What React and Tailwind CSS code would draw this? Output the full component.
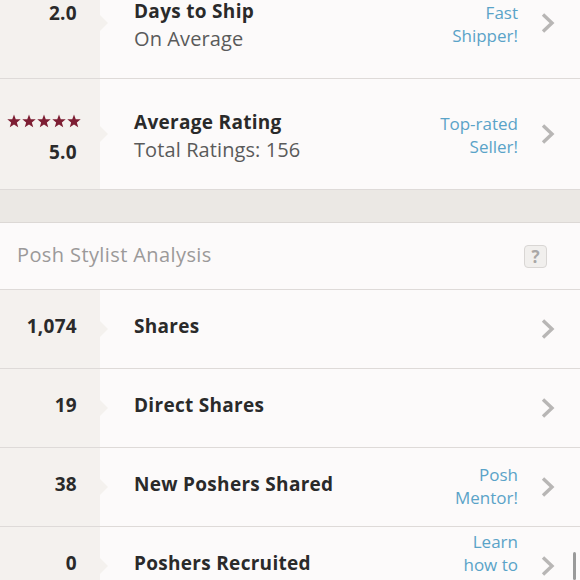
import React from "react";

const font = { fontFamily: "'Open Sans', Lato, sans-serif" };

function Chevron() {
  return (
    <svg width="16" height="22" viewBox="0 0 16 22" className="shrink-0">
      <path d="M3 2.5 L12 11 L3 19.5" fill="none" stroke="#b8b6b5" strokeWidth="3.4" />
    </svg>
  );
}

function Star() {
  return (
    <svg width="14" height="14" viewBox="0 0 24 23">
      <path
        d="M12 0.5 L15 8.3 L23.5 8.7 L16.9 14 L19.2 22.2 L12 17.6 L4.8 22.2 L7.1 14 L0.5 8.7 L9 8.3 Z"
        fill="#7d1e33"
      />
    </svg>
  );
}

// one stat row: grey number column on the left with a little notch, label, link text, chevron
function Row({ height, left, title, sub, link, linkTop = false }) {
  return (
    <div className={`flex border-b border-[#dedad8] ${height}`}>
      <div className="relative w-[100px] shrink-0 bg-[#f4f1ee] flex flex-col items-end justify-center pr-[23px]">
        {left}
        <div className="absolute right-[-8px] top-1/2 -translate-y-1/2 w-0 h-0 border-y-[8px] border-y-transparent border-l-[8px] border-l-[#f4f1ee]" />
      </div>
      <div className="flex-1 flex items-center pl-[34px] pr-[24px]">
        <div className={`flex-1 ${sub ? "pt-[4px]" : "-mt-[6px]"}`}>
          <div className="text-[19px] font-bold tracking-[0.3px] text-[#2a2a2a] leading-[27px]">{title}</div>
          {sub && <div className="text-[20px] tracking-[0.1px] text-[#5a5a5a] leading-[28px]">{sub}</div>}
        </div>
        {link && (
          <div
            className={`text-right text-[17px] leading-[23px] text-[#5aa3c8] mr-[22px] ${
              linkTop ? "self-start pt-[3px]" : sub ? "mt-[1px]" : "-mt-[2px]"
            }`}
          >
            {link.map((l) => (
              <div key={l}>{l}</div>
            ))}
          </div>
        )}
        <Chevron />
      </div>
    </div>
  );
}

function Num({ children, className = "-mt-[6px]" }) {
  return <div className={`text-[19px] font-bold tracking-[0.3px] text-[#2a2a2a] ${className}`}>{children}</div>;
}

export default function App() {
  return (
    <div className="relative w-[580px] h-[580px] overflow-hidden bg-[#fcfafa]" style={font}>
      <div className="-mt-[32px]">
        <Row
          height="h-[111px]"
          left={<Num className="-mt-[20px]">2.0</Num>}
          title="Days to Ship"
          sub="On Average"
          link={["Fast", "Shipper!"]}
        />
        <Row
          height="h-[111px]"
          left={
            <div className="flex flex-col items-end mr-[-4px] mt-[12px]">
              <div className="flex gap-[1px]">
                <Star />
                <Star />
                <Star />
                <Star />
                <Star />
              </div>
              <Num className="mt-[10px] mr-[4px]">5.0</Num>
            </div>
          }
          title="Average Rating"
          sub="Total Ratings: 156"
          link={["Top-rated", "Seller!"]}
        />
        <div className="h-[33px] bg-[#ebe8e4] border-b border-[#dcd8d5]" />
        <div className="h-[67px] flex items-center justify-between pl-[17px] pr-[33px] border-b border-[#dedad8]">
          <div className="text-[20px] tracking-[0.4px] text-[#9b9999] -mt-[3px]">Posh Stylist Analysis</div>
          <div className="w-[23px] h-[23px] rounded-[4px] border border-[#d9d6d4] bg-[#f1efed] flex items-center justify-center text-[17px] leading-none font-bold text-[#a9a7a6]">
            ?
          </div>
        </div>
        <Row height="h-[79px]" left={<Num>1,074</Num>} title="Shares" />
        <Row height="h-[79px]" left={<Num>19</Num>} title="Direct Shares" />
        <Row height="h-[79px]" left={<Num>38</Num>} title="New Poshers Shared" link={["Posh", "Mentor!"]} />
        <Row
          height="h-[79px]"
          left={<Num>0</Num>}
          title="Poshers Recruited"
          link={["Learn", "how to", "recruit"]}
          linkTop
        />
      </div>
      <div className="absolute right-[4px] bottom-0 w-[3px] h-[28px] rounded-full bg-[#9a9a9a]" />
    </div>
  );
}
